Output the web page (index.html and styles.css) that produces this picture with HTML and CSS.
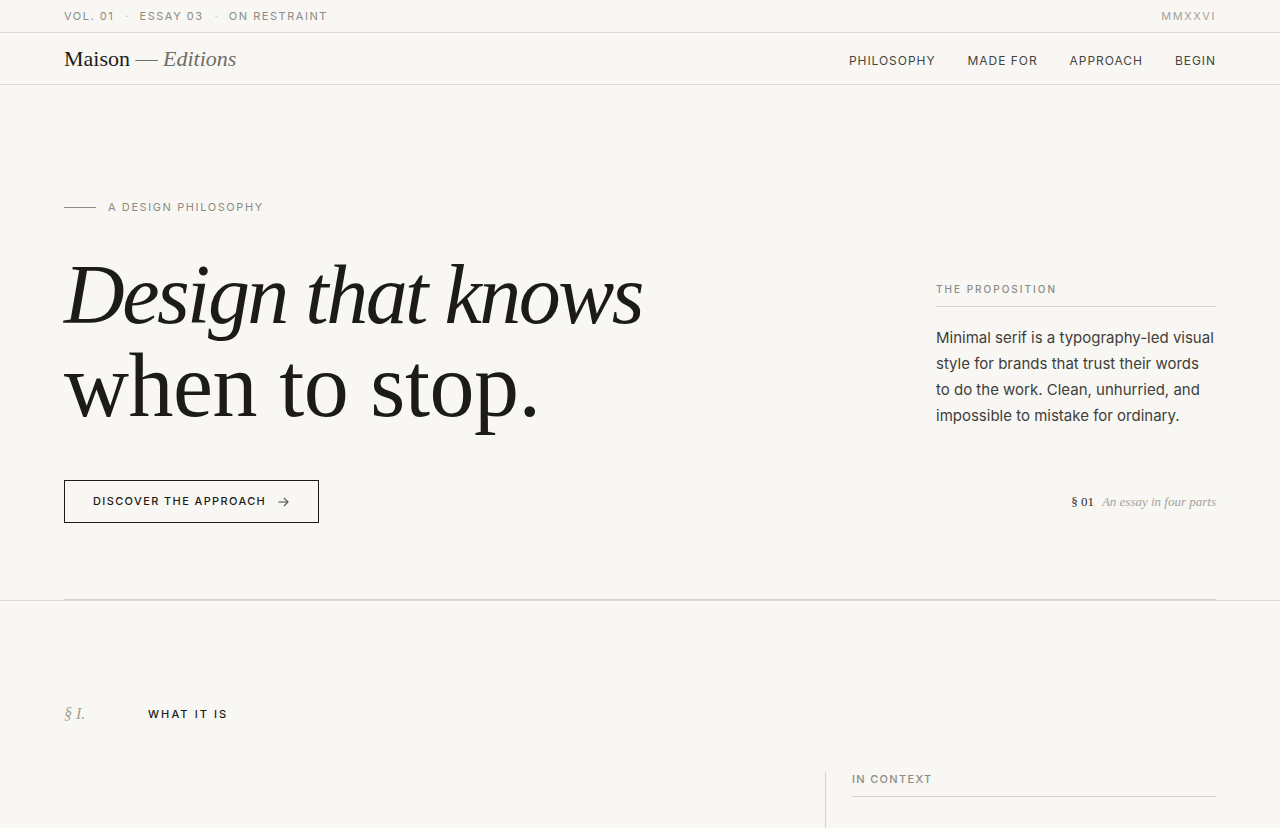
FILE: index.html
```html
<!DOCTYPE html>
<html lang="en">
<head>
    <meta charset="UTF-8">
    <meta name="viewport" content="width=device-width, initial-scale=1.0">
    <title>Maison — Editions · On Restraint</title>
    <link rel="stylesheet" href="styles.css">
</head>
<body>
    <div class="topbar">
        <div class="wrap topbar-inner">
            <div class="issue">
                <span>Vol. 01</span>
                <span class="dot">·</span>
                <span>Essay 03</span>
                <span class="dot">·</span>
                <span>On Restraint</span>
            </div>
            <div class="year">MMXXVI</div>
        </div>
    </div>

    <header class="nav">
        <div class="wrap nav-inner">
            <a class="logo" href="#">Maison <span class="dash">—</span> <em>Editions</em></a>
            <nav class="links">
                <a href="#philosophy">Philosophy</a>
                <a href="#made-for">Made for</a>
                <a href="#approach">Approach</a>
                <a href="#begin">Begin</a>
            </nav>
        </div>
    </header>

    <section class="hero">
        <div class="wrap hero-inner">
            <div class="eyebrow"><span class="rule"></span>A design philosophy</div>

            <div class="hero-grid">
                <h1 class="headline">
                    <em class="line">Design that knows</em>
                    <span class="line plain">when to stop.</span>
                </h1>

                <aside class="proposition">
                    <h4 class="label">The proposition</h4>
                    <p>Minimal serif is a typography-led visual style for brands that trust their words to do the work. Clean, unhurried, and impossible to mistake for ordinary.</p>
                </aside>

                <div>
                    <a class="btn" href="#approach">
                        Discover the approach
                        <svg width="11" height="10" viewBox="0 0 11 10" fill="none" stroke="currentColor" stroke-width="1.1">
                            <path d="M0.5 5h9.5"/>
                            <path d="M6 1l4 4-4 4"/>
                        </svg>
                    </a>
                </div>

                <div class="note"><span class="num">§ 01</span><em>An essay in four parts</em></div>
            </div>
        </div>
    </section>

    <section class="chapter" id="philosophy">
        <div class="wrap">
            <div class="chapter-head">
                <span class="mark">§ I.</span>
                <h3>What it is</h3>
            </div>

            <div class="chapter-grid">
                <div class="chapter-body"></div>
                <aside class="context">
                    <h4 class="label">In context</h4>
                </aside>
            </div>
        </div>
    </section>
</body>
</html>
```

FILE: styles.css
```css
body {
    margin: 0;
    background-color: #f8f7f3;
    color: #1c1b18;
    font-family: Inter, "Liberation Sans", sans-serif;
    -webkit-font-smoothing: antialiased;
}
a {
    color: inherit;
    text-decoration: none;
}
h1, h3, h4, p {
    margin: 0;
}
.wrap {
    max-width: 1152px;
    margin: 0 auto;
}

/* top strip */
.topbar {
    height: 32px;
    border-bottom: 1px solid #dcdad3;
}
.topbar-inner {
    height: 32px;
    display: flex;
    align-items: center;
    justify-content: space-between;
    font-size: 11px;
    letter-spacing: 0.14em;
    text-transform: uppercase;
    color: #8c8b85;
}
.issue {
    display: flex;
    gap: 11px;
}
.issue .dot {
    color: #c4c2bb;
    letter-spacing: 0;
}
.year {
    color: #a3a29c;
}

/* nav */
.nav {
    border-bottom: 1px solid #dcdad3;
}
.nav-inner {
    height: 51px;
    display: flex;
    align-items: center;
    justify-content: space-between;
}
.logo {
    font-family: "Liberation Serif", serif;
    font-size: 22px;
    color: #1c1b18;
}
.logo .dash,
.logo em {
    color: #6e6d68;
}
.links {
    display: flex;
    gap: 32px;
    padding-top: 3px;
}
.links a {
    font-size: 12px;
    letter-spacing: 0.08em;
    text-transform: uppercase;
    color: #45443f;
}

/* hero */
.hero-inner {
    padding: 114px 0 76px;
    border-bottom: 1px solid #d4d2ca;
}
.eyebrow {
    display: flex;
    align-items: center;
    gap: 12px;
    font-size: 11px;
    line-height: 16px;
    letter-spacing: 0.145em;
    text-transform: uppercase;
    color: #8c8b85;
}
.eyebrow .rule {
    width: 32px;
    height: 1px;
    background: #8c8b85;
}
.hero-grid {
    display: grid;
    grid-template-columns: 1fr 280px;
    row-gap: 49px;
    margin-top: 34px;
}
.headline {
    font-family: "Liberation Serif", serif;
    font-weight: 400;
    font-size: 84px;
    color: #1c1b18;
}
.headline .line {
    display: block;
    line-height: 91px;
}
.headline em {
    letter-spacing: -0.03em;
}
.headline .plain {
    font-size: 90px;
    letter-spacing: -0.005em;
}
.label {
    font-size: 10px;
    font-weight: 500;
    letter-spacing: 0.2em;
    text-transform: uppercase;
    color: #8c8b85;
    padding-bottom: 11px;
    border-bottom: 1px solid #d6d4cd;
}
.proposition {
    padding-top: 34px;
}
.proposition p {
    margin-top: 18px;
    font-size: 15px;
    line-height: 26px;
    color: #3f3e3a;
}
.btn {
    display: inline-flex;
    align-items: center;
    gap: 12px;
    padding: 15px 29px 15px 28px;
    border: 1px solid #1c1b18;
    font-size: 11px;
    line-height: 11px;
    font-weight: 500;
    letter-spacing: 0.125em;
    text-transform: uppercase;
    color: #1c1b18;
}
.btn svg {
    color: #55544f;
}
.note {
    display: flex;
    align-items: center;
    justify-content: flex-end;
    gap: 8px;
    font-family: "Liberation Serif", serif;
    font-size: 13px;
}
.note .num {
    color: #2b2a27;
}
.note em {
    color: #a3a29c;
}

/* chapter */
.chapter {
    border-top: 1px solid #dcdad3;
    padding-top: 103px;
}
.chapter-head {
    display: flex;
    align-items: center;
    height: 20px;
}
.chapter-head .mark {
    width: 84px;
    font-family: "Liberation Serif", serif;
    font-style: italic;
    font-size: 16px;
    color: #a3a29c;
}
.chapter-head h3 {
    font-size: 11px;
    font-weight: 500;
    letter-spacing: 0.19em;
    text-transform: uppercase;
    color: #1c1b18;
}
.chapter-grid {
    display: grid;
    grid-template-columns: 1fr 391px;
    margin-top: 48px;
}
.context {
    border-left: 1px solid #d6d4cd;
    padding: 0 0 40px 26px;
}
.context .label {
    font-size: 11px;
    letter-spacing: 0.12em;
    padding-bottom: 10px;
}
```
